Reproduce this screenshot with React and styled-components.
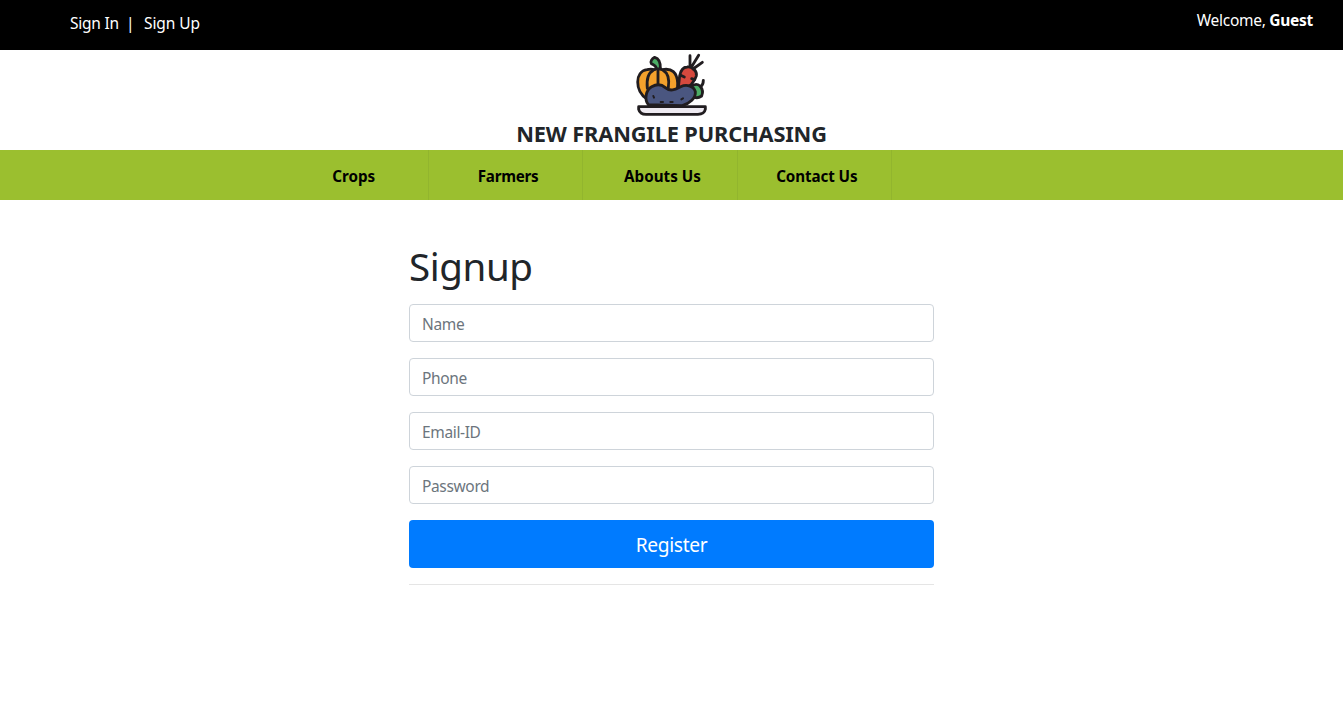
import React from "react";
import styled, { createGlobalStyle } from "styled-components";

const GlobalStyle = createGlobalStyle`
  *, *::before, *::after { box-sizing: border-box; }
  body {
    margin: 0;
    background: #fff;
    color: #212529;
    font-family: "Segoe UI", "Noto Sans", sans-serif;
    font-size: 15.5px;
    line-height: 24px;
    overflow: hidden;
  }
`;

const TopBar = styled.header`
  display: flex;
  justify-content: space-between;
  height: 50px;
  padding: 0 30px 0 70px;
  background: #000;
  color: #fff;
`;

const AuthLinks = styled.nav`
  display: flex;
  padding-top: 11px;
  white-space: pre;
`;

const AuthLink = styled.a`
  width: ${(p) => p.$width}px;
  color: #fff;
  letter-spacing: ${(p) => p.$spacing}px;
  text-decoration: none;
`;

const Divider = styled.span`
  width: 26px;
  padding-left: 8px;
`;

const Welcome = styled.div`
  padding-top: 8px;
  letter-spacing: -0.28px;
  white-space: nowrap;
`;

const Brand = styled.div`
  display: flex;
  flex-direction: column;
  align-items: center;
  height: 100px;
`;

const LogoArt = styled.svg`
  display: block;
  width: 80px;
  height: 70px;
`;

const BrandName = styled.h1`
  margin: 0;
  font-size: 21.8px;
  font-weight: 700;
  line-height: 27px;
  letter-spacing: -0.15px;
  white-space: nowrap;
`;

const NavBar = styled.nav`
  display: flex;
  height: 50px;
  padding-left: 274.5px;
  background: #9bbf2f;
`;

const NavItem = styled.a`
  width: 154.4px;
  padding: 14px 0 0 5px;
  border-right: 1px solid #92b52e;
  color: #000;
  font-size: 15.2px;
  font-weight: 700;
  letter-spacing: ${(p) => p.$spacing}px;
  text-align: center;
  text-decoration: none;
`;

const Form = styled.form`
  display: flex;
  flex-direction: column;
  gap: 16px;
  width: 525px;
  margin: 42px auto 0;
`;

const Heading = styled.h2`
  margin: 0 0 -2px;
  font-size: 38.5px;
  font-weight: 400;
  line-height: 48px;
  letter-spacing: -0.4px;
`;

const Field = styled.input`
  width: 100%;
  height: 38px;
  padding: 7px 12px 5px;
  border: 1px solid #ced4da;
  border-radius: 4px;
  background: #fff;
  color: #495057;
  font: inherit;
  letter-spacing: -0.35px;
  outline: none;

  &::placeholder {
    color: #6c757d;
    opacity: 1;
  }
`;

const SubmitButton = styled.button`
  height: 48px;
  padding: 2px 16px 0;
  border: 0;
  border-radius: 4px;
  background: #007bff;
  color: #fff;
  font: inherit;
  font-size: 19.2px;
  letter-spacing: -0.35px;
`;

const Rule = styled.hr`
  width: 100%;
  margin: 0;
  border: 0;
  border-top: 1px solid #e5e5e5;
`;

function VegetableLogo() {
  return (
    <LogoArt viewBox="0 0 240 210" aria-hidden="true">
      <g stroke="#211d20" strokeWidth="8.5" strokeLinecap="round" strokeLinejoin="round">
        <path d="M44 146C8 124 8 64 45 59Q57 56 67 59Q79 52 91 59Q134 51 137 99Q139 126 118 140Z" fill="#f3a12c" />
        <path d="M64 61C48 69 43 85 46 115M78 62V103M93 61C108 69 113 85 109 113" fill="none" />
        <path d="M73 56C73 47 68 46 58 41C54 34 60 26 68 22C80 25 86 38 85 57Z" fill="#4cad65" />
        <path d="M138 122L143 77Q148 52 165 51C181 49 196 63 193 78Q190 89 179 102L156 122Z" fill="#d6493e" />
        <path d="M174 50V17M178 52L200 16M183 57L211 37M146 76L157 81M187 89L179 86" fill="none" />
        <path d="M177 111Q191 97 204 108Q216 122 209 138Q193 149 181 137Z" fill="#4cad65" />
        <path d="M207 109Q214 104 214 91" fill="none" />
        <path d="M49 164C36 148 42 119 59 110C76 101 91 105 100 113C116 127 132 117 146 110C165 101 186 109 190 125C192 145 173 160 151 167Z" fill="#4a5680" />
        <path d="M20 170H220V178Q217 193 198 193H42Q24 193 20 178Z" fill="#eeeaf1" />
        <path d="M64 138L66 143M86 156H93M115 156H122M148 148L153 145" fill="none" strokeWidth="6" />
      </g>
    </LogoArt>
  );
}

const navItems = [
  { label: "Crops", spacing: 0 },
  { label: "Farmers", spacing: -0.25 },
  { label: "Abouts Us", spacing: 0 },
  { label: "Contact Us", spacing: -0.1 },
];

const fields = [
  { label: "Name", type: "text" },
  { label: "Phone", type: "tel" },
  { label: "Email-ID", type: "email" },
  { label: "Password", type: "password" },
];

export default function App() {
  return (
    <>
      <GlobalStyle />
      <TopBar>
        <AuthLinks>
          <AuthLink href="#signin" $width={48} $spacing={-0.25}>Sign In</AuthLink>
          <Divider>|</Divider>
          <AuthLink href="#signup" $width={58} $spacing={-0.1}>Sign Up</AuthLink>
        </AuthLinks>
        <Welcome>Welcome, <b>Guest</b></Welcome>
      </TopBar>
      <Brand>
        <VegetableLogo />
        <BrandName>NEW FRANGILE PURCHASING</BrandName>
      </Brand>
      <NavBar>
        {navItems.map((item) => (
          <NavItem key={item.label} href="#" $spacing={item.spacing}>{item.label}</NavItem>
        ))}
      </NavBar>
      <Form>
        <Heading>Signup</Heading>
        {fields.map((field) => (
          <Field key={field.label} type={field.type} placeholder={field.label} />
        ))}
        <SubmitButton type="button">Register</SubmitButton>
        <Rule />
      </Form>
    </>
  );
}
